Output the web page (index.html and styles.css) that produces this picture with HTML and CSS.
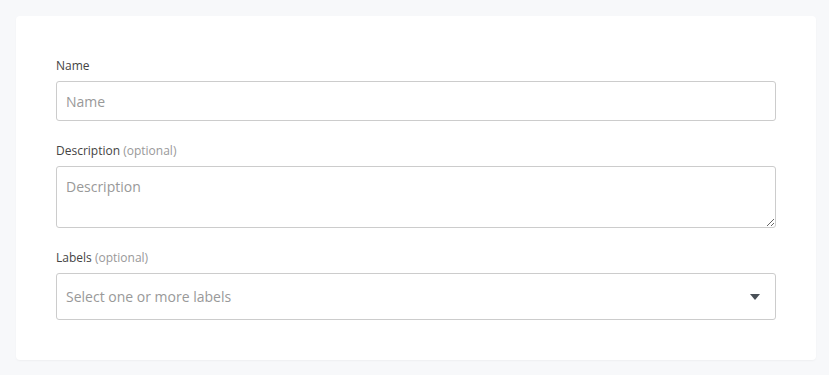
FILE: index.html
```html
<!DOCTYPE html>
<html>
<head>
<meta charset="utf-8">
<link rel="stylesheet" href="styles.css">
</head>
<body>
<div class="card">
  <div class="field">
    <label class="label">Name</label>
    <input class="input" type="text" placeholder="Name">
  </div>
  <div class="field">
    <label class="label">Description <span class="opt">(optional)</span></label>
    <textarea class="textarea" placeholder="Description"></textarea>
  </div>
  <div class="field">
    <label class="label">Labels <span class="opt">(optional)</span></label>
    <div class="select">
      <span class="ph">Select one or more labels</span>
      <svg class="caret" width="10" height="6" viewBox="0 0 10 6"><path d="M0 0h10L5 6z" fill="#495057"/></svg>
    </div>
  </div>
</div>
</body>
</html>
```
FILE: styles.css
```css
* { box-sizing: border-box; }
html, body { margin: 0; padding: 0; }
body {
  background: #f7f8fa;
  font-family: "Open Sans", "Segoe UI", sans-serif;
  padding: 16px 13px 15px 16px;
}
.card {
  background: #fff;
  border-radius: 4px;
  box-shadow: 0 1px 2px rgba(0,0,0,0.04);
  padding: 42px 40px 40px 40px;
  display: flex;
  flex-direction: column;
  gap: 22px;
}
.field { display: flex; flex-direction: column; }
.label {
  font-size: 12px;
  line-height: 16px;
  color: #444;
  margin-bottom: 7px;
}
.opt { color: #999; }
.input, .textarea, .select {
  width: 100%;
  border: 1px solid #ccc;
  border-radius: 3px;
  font-family: inherit;
  font-size: 14px;
  color: #333;
  background: #fff;
  outline: none;
}
.input { height: 40px; padding: 0 9px; }
.textarea { height: 62px; padding: 10px 9px; resize: vertical; display: block; margin: 0; }
.input::placeholder, .textarea::placeholder { color: #999; }
.select {
  height: 47px;
  padding: 0 15px 0 9px;
  display: flex;
  align-items: center;
  justify-content: space-between;
}
.ph { color: #999; }
```
